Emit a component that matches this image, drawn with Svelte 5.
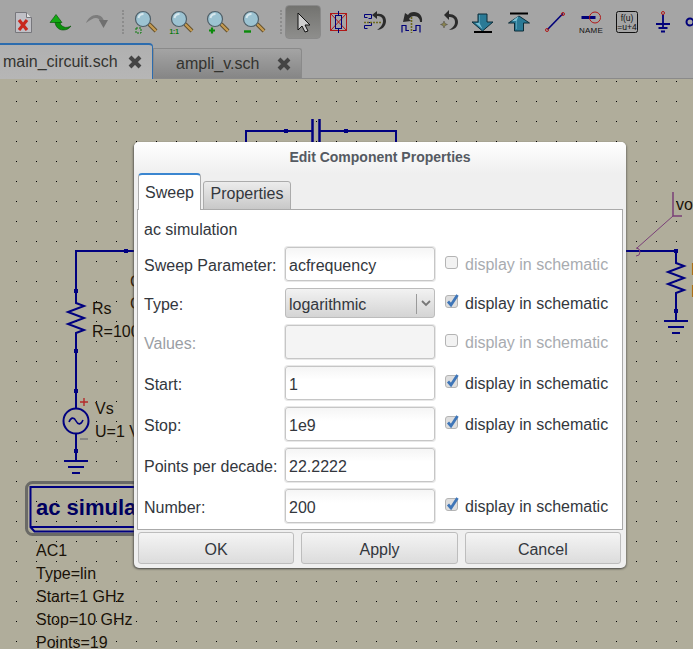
<script>
  const rows = [
    { label: 'Sweep Parameter:', value: 'acfrequency', check: 'off' },
    { label: 'Type:', value: 'logarithmic', check: 'on', select: true },
    { label: 'Values:', value: '', check: 'off', disabled: true },
    { label: 'Start:', value: '1', check: 'on' },
    { label: 'Stop:', value: '1e9', check: 'on' },
    { label: 'Points per decade:', value: '22.2222' },
    { label: 'Number:', value: '200', check: 'on' }
  ];
  const zooms = ['fit', 'one', 'plus', 'minus'];
</script>

<div class="app">
  <div class="toolbar">
    <div class="tool">
      <svg viewBox="0 0 24 24"><path d="M3.500 2.500h11l5 5v15h-16z" fill="#c0c0c6" stroke="#77777c"/><path d="M14.500 2.500v5h5" fill="#e2e2e2" stroke="#77777c"/><path d="M7 10l8 10M15 10l-8 10" stroke="#c8281e" stroke-width="3.200"/></svg>
    </div>
    <div class="tool">
      <svg viewBox="0 0 24 24"><path d="M7 11c0 6 4 9 8 9 3 0 6-1 8-4-2 1-5 2-7 1-3-1-4-3-4-6z" fill="#0a920a" stroke="#064d06" stroke-width=".6"/><path d="M2 12.500l6-8 6 8z" fill="#14aa14" stroke="#064d06" stroke-width=".6"/></svg>
    </div>
    <div class="tool">
      <svg viewBox="0 0 24 24"><path d="M2 13c2-5 6-8 10-8 4 0 7 2 8 6h-4c-1-2-2-3-4-3-3 0-6 2-10 5z" fill="#7d7d7d"/><path d="M15 10h9l-4.500 8z" fill="#6f6f6f"/></svg>
    </div>
    <div class="sep first"></div>
    {#each zooms as z}
      <div class="tool">
        <svg viewBox="0 0 24 24">
          <path d="M18 14l7 7" stroke="#5d4a26" stroke-width="4"/>
          <path d="M18 14l7 7" stroke="#c49a52" stroke-width="2.400"/>
          <circle cx="12" cy="9" r="7.500" fill="#9cc3d2" stroke="#4f5f68" stroke-width="1.200"/>
          <path d="M7.500 8a5 5 0 0 1 5-4" stroke="#d8e8ee" stroke-width="2" fill="none"/>
          {#if z === 'fit'}
            <rect x="5" y="18" width="5" height="5" fill="none" stroke="#0a7a0a" stroke-dasharray="2 1"/>
          {:else if z === 'one'}
            <text x="2.500" y="23.500" class="one">1:1</text>
          {:else if z === 'plus'}
            <path d="M9 17.500v6M6 20.500h6" stroke="#0a8a0a" stroke-width="2.200"/>
          {:else}
            <path d="M5 21.500h7" stroke="#0a8a0a" stroke-width="2.400"/>
          {/if}
        </svg>
      </div>
    {/each}
    <div class="sep second"></div>
    <div class="tool active">
      <svg viewBox="0 0 24 24"><path d="M7 3v17l4-4 3 6 3-1-3-6h5z" fill="#cfcfcf" stroke="#111"/></svg>
    </div>
    <div class="tool">
      <svg viewBox="0 0 24 24"><rect x="3.500" y="3.500" width="16" height="17" fill="none" stroke="#b01818"/><path d="M3.500 3.500l16 17M19.500 3.500l-16 17" stroke="#b01818"/><path d="M11.500 1v4M11.500 19v4" stroke="#00007a"/><rect x="8.500" y="5.500" width="6" height="13" fill="none" stroke="#00007a"/></svg>
    </div>
    <div class="tool">
      <svg viewBox="0 0 24 24">
        <path d="M1.500 4.500h7v4h-3M1.500 4.500v3h3M1.500 15.500h7v-3h-4M1.500 15.500v3h3" fill="none" stroke="#00007a"/>
        <path d="M1 12.500h17" stroke="#6e6a20" stroke-width="1.600" stroke-dasharray="2 1"/>
        <path d="M14 4c5-1 9 2 9 7 0 5-4 9-9 9 3-2 6-5 6-9s-3-5-6-5v3l-5-4 5-4z" fill="#2b2b2b"/>
      </svg>
    </div>
    <div class="tool">
      <svg viewBox="0 0 24 24">
        <path d="M3 22.500v-7h4v5h3M21 22.500v-7h-4v5h-3" fill="none" stroke="#00007a" stroke-width="1.200"/>
        <path d="M12.500 7v16" stroke="#6e6a20" stroke-width="1.600" stroke-dasharray="2 1"/>
        <path d="M21 12c1-6-3-10-8-10-3 0-5 1-6 3L4 3 2 12l8-1-2-2c1-2 3-3 5-3 4 0 6 3 6 6z" fill="#2b2b2b" transform="translate(2 0)"/>
      </svg>
    </div>
    <div class="tool">
      <svg viewBox="0 0 24 24">
        <path d="M14 4c5 0 9 3 9 8 0 5-4 8-9 8 3-2 6-4 6-8s-3-5-6-5v3l-5-5 5-5z" fill="#2b2b2b"/>
        <path d="M9 11l1 2.500 2.500 1-2.500 1-1 2.500-1-2.500-2.500-1 2.500-1z" fill="#8a8450" stroke="#333" stroke-width=".4"/>
      </svg>
    </div>
    <div class="tool">
      <svg viewBox="0 0 24 24"><path d="M7 4h9v8h6l-10.500 9L1 12h6z" fill="#2a7a96" stroke="#0c2c38"/><path d="M9 5v8H4.500l7 6-3-6V5z" fill="#7cc0d4"/><path d="M3 20.500h18" stroke="#000" stroke-width="2" transform="translate(0 1.500)"/></svg>
    </div>
    <div class="tool">
      <svg viewBox="0 0 24 24"><path d="M3 3.500h18" stroke="#000" stroke-width="2"/><path d="M7 20h9v-8h6L11.500 5 1 12h6z" fill="#2a7a96" stroke="#0c2c38" transform="translate(.5 1)"/><path d="M9 19v-8H5l6.500-5-2 5v8z" fill="#7cc0d4"/></svg>
    </div>
    <div class="tool">
      <svg viewBox="0 0 24 24"><path d="M4.500 19.500L20 3.500" stroke="#00007a" stroke-width="1.600"/><circle cx="4" cy="20" r="1.500" fill="none" stroke="#b01818"/><circle cx="20" cy="4" r="1.500" fill="none" stroke="#b01818"/></svg>
    </div>
    <div class="tool">
      <svg viewBox="0 0 24 24"><path d="M2.500 7.500h14" stroke="#00007a" stroke-width="3"/><circle cx="16" cy="7.500" r="5.500" fill="none" stroke="#b01818"/><text x="12" y="22.500" class="name">NAME</text></svg>
    </div>
    <div class="tool">
      <svg viewBox="0 0 24 24"><rect x="1.500" y="1.500" width="21" height="21" rx="2" fill="none" stroke="#111"/><text x="12" y="10.500" class="fu">f(u)</text><text x="12" y="19.500" class="fu">=u+4</text></svg>
    </div>
    <div class="tool">
      <svg viewBox="0 0 24 24"><path d="M12 5v13M5 14.500h14M7.500 18.500h9M10 22h4" stroke="#00007a" stroke-width="1.800" transform="translate(0 -.500)"/><circle cx="12" cy="3" r="1.500" fill="none" stroke="#b01818"/></svg>
    </div>
    <div class="tool">
      <svg viewBox="0 0 24 24"><circle cx="3" cy="12" r="3.500" fill="none" stroke="#00007a" stroke-width="2"/></svg>
    </div>
  </div>

  <div class="tabs">
    <div class="doc-tab current">
      <span>main_circuit.sch</span>
      <svg class="close" viewBox="0 0 16 16"><path d="M3 3l10 10M13 3L3 13" stroke="#444" stroke-width="4"/></svg>
    </div>
    <div class="doc-tab">
      <span>ampli_v.sch</span>
      <svg class="close" viewBox="0 0 16 16"><path d="M3 3l10 10M13 3L3 13" stroke="#444" stroke-width="4"/></svg>
    </div>
  </div>

  <div class="canvas">
    <svg class="schematic" viewBox="0 79 693 570">
      <defs>
        <pattern id="dots" x="16" y="81" width="20" height="20" patternUnits="userSpaceOnUse">
          <rect width="1" height="1" fill="#000"/>
        </pattern>
      </defs>
      <rect x="0" y="79" width="693" height="570" fill="url(#dots)"/>

      <g fill="none" stroke="#000080" stroke-width="2">
        <path d="M246 145V131H312M320 131H396V145"/>
        <path d="M312.500 119V142M319.500 119V142" stroke-width="2.500"/>
        <path d="M140 251H76V303l8 3-16 6 16 6-16 6 16 6-8 3V408M76 434V461"/>
        <path d="M64 461H88M68 467H84M72 473H80" stroke-width="2"/>
        <circle cx="76" cy="421" r="12.500"/>
        <path d="M69 422c2-5 5-5 7-1s5 4 7-1" stroke-width="1.600"/>
        <path d="M620 251H676V263l8 3-16 6 16 6-16 6 16 6-8 3V321"/>
        <path d="M664 321H688M668 327H684M672 333H680"/>
      </g>
      <g fill="#000080">
        <rect x="284" y="129" width="4" height="4"/>
        <rect x="344" y="129" width="4" height="4"/>
        <rect x="124" y="249" width="4" height="4"/>
        <rect x="74" y="289" width="4" height="4"/>
        <rect x="74" y="349" width="4" height="4"/>
        <rect x="74" y="389" width="4" height="4"/>
        <rect x="74" y="449" width="4" height="4"/>
        <rect x="674" y="249" width="4" height="4"/>
        <rect x="674" y="309" width="4" height="4"/>
      </g>
      <g fill="none" stroke="#7a3f78">
        <path d="M673 192V216H682" stroke-width="1.500"/>
        <path d="M673 216L637 248"/>
        <path d="M636 248a4 4 0 1 1 0 8"/>
      </g>
      <path d="M84 398v8M80 402h8" stroke="#b42a2a" stroke-width="1.400"/>
      <path d="M80 439h8" stroke="#777" stroke-width="1.400"/>

      <text x="92" y="314" class="sch">Rs</text>
      <text x="92" y="337" class="sch">R=100</text>
      <text x="95" y="414" class="sch">Vs</text>
      <text x="95" y="437" class="sch">U=1 V</text>
      <text x="676" y="210" class="sch">vo</text>
      <text x="130" y="287" class="sch brown">C</text>
      <text x="130" y="309" class="sch brown">C</text>
      <text x="691" y="275" class="sch orange">R</text>
      <text x="691" y="297" class="sch orange">R</text>

      <rect x="26.500" y="482.500" width="260" height="52" rx="6" fill="none" stroke="#6a6a66" stroke-width="3"/>
      <path d="M260 487H30.500V527l4 4.500H260M31 527H260" fill="none" stroke="#000080" stroke-width="2"/>
      <text x="36" y="515" class="title">ac simulation</text>

      <text x="36" y="556" class="sch">AC1</text>
      <text x="36" y="579" class="sch">Type=lin</text>
      <text x="36" y="602" class="sch">Start=1 GHz</text>
      <text x="36" y="625" class="sch">Stop=10 GHz</text>
      <text x="36" y="648" class="sch">Points=19</text>
    </svg>

    <div class="dialog">
      <div class="title-bar">Edit Component Properties</div>
      <div class="page-tabs">
        <div class="page-tab selected">Sweep</div>
        <div class="page-tab">Properties</div>
      </div>
      <div class="pane">
        <div class="heading">ac simulation</div>
        <div class="form">
          {#each rows as r}
            <div class="row" class:select-row={r.select}>
              <span class="label" class:muted={r.disabled}>{r.label}</span>
              {#if r.select}
                <div class="combo">
                  <span>{r.value}</span>
                  <svg viewBox="0 0 18 24"><path d="M.5 3v20" stroke="#9a9a9a"/><path d="M6 10l4 4 4-4" stroke="#777" stroke-width="1.800" fill="none"/></svg>
                </div>
              {:else}
                <input class="field" class:off={r.disabled} value={r.value} readonly disabled={r.disabled} />
              {/if}
              {#if r.check}
                <div class="check" class:faded={r.check === 'off'}>
                  <svg viewBox="0 0 14 14">
                    <rect x=".5" y="1.500" width="12" height="12" rx="2.500" fill={r.check === 'on' ? '#dedede' : '#f2f2f2'} stroke="#b4b4b4"/>
                    {#if r.check === 'on'}
                      <path d="M3 7.500l3 3.500 6.500-10" stroke="#3f76b8" stroke-width="2.800" fill="none"/>
                    {/if}
                  </svg>
                  <span>display in schematic</span>
                </div>
              {/if}
            </div>
          {/each}
        </div>
      </div>
      <div class="buttons">
        <button>OK</button>
        <button>Apply</button>
        <button>Cancel</button>
      </div>
    </div>
  </div>
</div>

<style>
  :global(body) { margin: 0; overflow: hidden; }
  .app { width: 693px; height: 649px; overflow: hidden; display: flex; flex-direction: column; font-family: "Liberation Sans", Arial, sans-serif; background: #a5a5a5; }

  .toolbar { height: 43px; box-sizing: border-box; padding: 5px 0 4px 6px; display: flex; flex-shrink: 0; }
  .tool { width: 36px; height: 34px; flex-shrink: 0; display: flex; align-items: center; justify-content: center; box-sizing: border-box; }
  .tool svg { width: 24px; height: 24px; overflow: visible; }
  .active { background: linear-gradient(#737370, #8e8e8c); border: 1px solid #8a8a8a; border-radius: 4px; }
  .sep { flex-shrink: 0; }
  .sep::after { content: ''; display: block; margin-top: 5px; height: 24px; border-left: 2px dotted #8c8c8c; }
  .sep.first { width: 11px; }
  .sep.first::after { margin-left: 8px; }
  .sep.second { width: 16px; }
  .sep.second::after { margin-left: 11px; }
  .one { font-size: 6.500px; font-weight: 700; fill: #0a7a0a; }
  .name { font-size: 8px; text-anchor: middle; fill: #111; letter-spacing: .2px; }
  .fu { font-size: 8.500px; text-anchor: middle; fill: #111; }

  .tabs { height: 36px; flex-shrink: 0; display: flex; align-items: flex-end; box-sizing: border-box; border-bottom: 1px solid #8a8a8a; }
  .doc-tab { width: 149px; height: 30px; box-sizing: border-box; display: flex; align-items: center; justify-content: space-between; padding: 0 9px 0 22px; font-size: 16px; color: #33332f; background: linear-gradient(#a4a4a4, #868686); border: 1px solid #8a8a8a; border-bottom: 0; border-radius: 0 3px 0 0; }
  .doc-tab.current { width: 153px; height: 36px; padding: 0 9px 0 3px; background: linear-gradient(#b0b0b0, #b6b6b6); border: 0; border-top: 2px solid #2c6cae; border-right: 1px solid #2c6cae; border-radius: 0 4px 0 0; margin-bottom: -1px; position: relative; }
  .close { width: 16px; height: 16px; }

  .canvas { flex: 1; position: relative; background: #b0ad9b; }
  .schematic { display: block; width: 693px; height: 570px; }
  .sch { font-size: 16px; fill: #1a1208; font-family: "Liberation Sans", Arial, sans-serif; }
  .brown { fill: #33200a; }
  .orange { fill: #a85a10; }
  .title { font-size: 22px; font-weight: 700; fill: #000060; font-family: "Liberation Sans", Arial, sans-serif; }

  .dialog { position: absolute; left: 134px; top: 63px; width: 492px; height: 426px; box-sizing: border-box; background: #efefef; border-radius: 5px; box-shadow: -1px 1px 2px rgba(50, 50, 50, .6), 1px 1px 2px rgba(50, 50, 50, .4); display: flex; flex-direction: column; color: #33373d; }
  .title-bar { height: 31px; flex-shrink: 0; text-align: center; font-size: 14px; font-weight: 700; line-height: 30px; color: #555a62; background: linear-gradient(#fff, #efefef); border-radius: 5px 5px 0 0; }
  .page-tabs { display: flex; align-items: flex-end; height: 37px; flex-shrink: 0; padding-left: 4px; position: relative; z-index: 1; margin-bottom: -1px; }
  .page-tab { height: 29px; width: 88px; box-sizing: border-box; text-align: center; font-size: 16px; line-height: 24px; border: 1px solid #ababab; border-radius: 3px 3px 0 0; background: linear-gradient(#ececec, #c8c8c8); margin-left: 2px; }
  .page-tab.selected { height: 37px; width: 63px; margin-left: 0; line-height: 36px; background: #fff; border: 1px solid #ababab; border-top: 2px solid #3b86d0; border-bottom: 0; border-radius: 4px 4px 0 0; }

  .pane { height: 321px; margin: 0 3px; box-sizing: border-box; background: #fff; border: 1px solid #aaa; padding: 11px 6px 0; flex-shrink: 0; font-size: 16px; }
  .heading { height: 18px; line-height: 18px; }
  .form { margin-top: 8px; display: flex; flex-direction: column; gap: 7px; }
  .row { height: 34px; display: grid; grid-template-columns: 141px 150px 1fr; align-items: center; }
  .row.select-row { height: 30px; }
  .label { padding-top: 4px; }
  .muted { color: #9a9ea4; }
  .field { width: 150px; height: 34px; box-sizing: border-box; padding: 4px 3px 0; margin: 0; font: inherit; color: #33373d; border: 1px solid #c6c6c6; border-radius: 3px; background: linear-gradient(#f5f5f5, #fff 40%); box-shadow: 0 0 0 1px #e8e8e8; outline: none; opacity: 1; }
  .field.off { background: #f4f4f4; }
  .combo { height: 30px; box-sizing: border-box; display: flex; align-items: center; justify-content: space-between; padding: 0 0 0 3px; border: 1px solid #bcbcbc; border-radius: 3px; background: linear-gradient(#f2f2f2, #d4d4d4); }
  .combo span { padding-top: 4px; }
  .combo svg { width: 18px; height: 24px; }
  .check { display: flex; align-items: center; gap: 6px; padding-left: 10px; }
  .check span { padding-top: 2px; }
  .check svg { width: 14px; height: 14px; margin-top: -4px; flex-shrink: 0; }
  .check.faded { color: #a8abb0; }

  .buttons { display: flex; gap: 7px; padding: 2px 5px 0 4px; }
  button { flex: 1; height: 32px; font: inherit; font-size: 16px; color: #33373d; border: 1px solid #bdbdbd; border-radius: 3px; background: linear-gradient(#f4f4f4, #dcdcdc); padding: 4px 0 0; }
</style>
